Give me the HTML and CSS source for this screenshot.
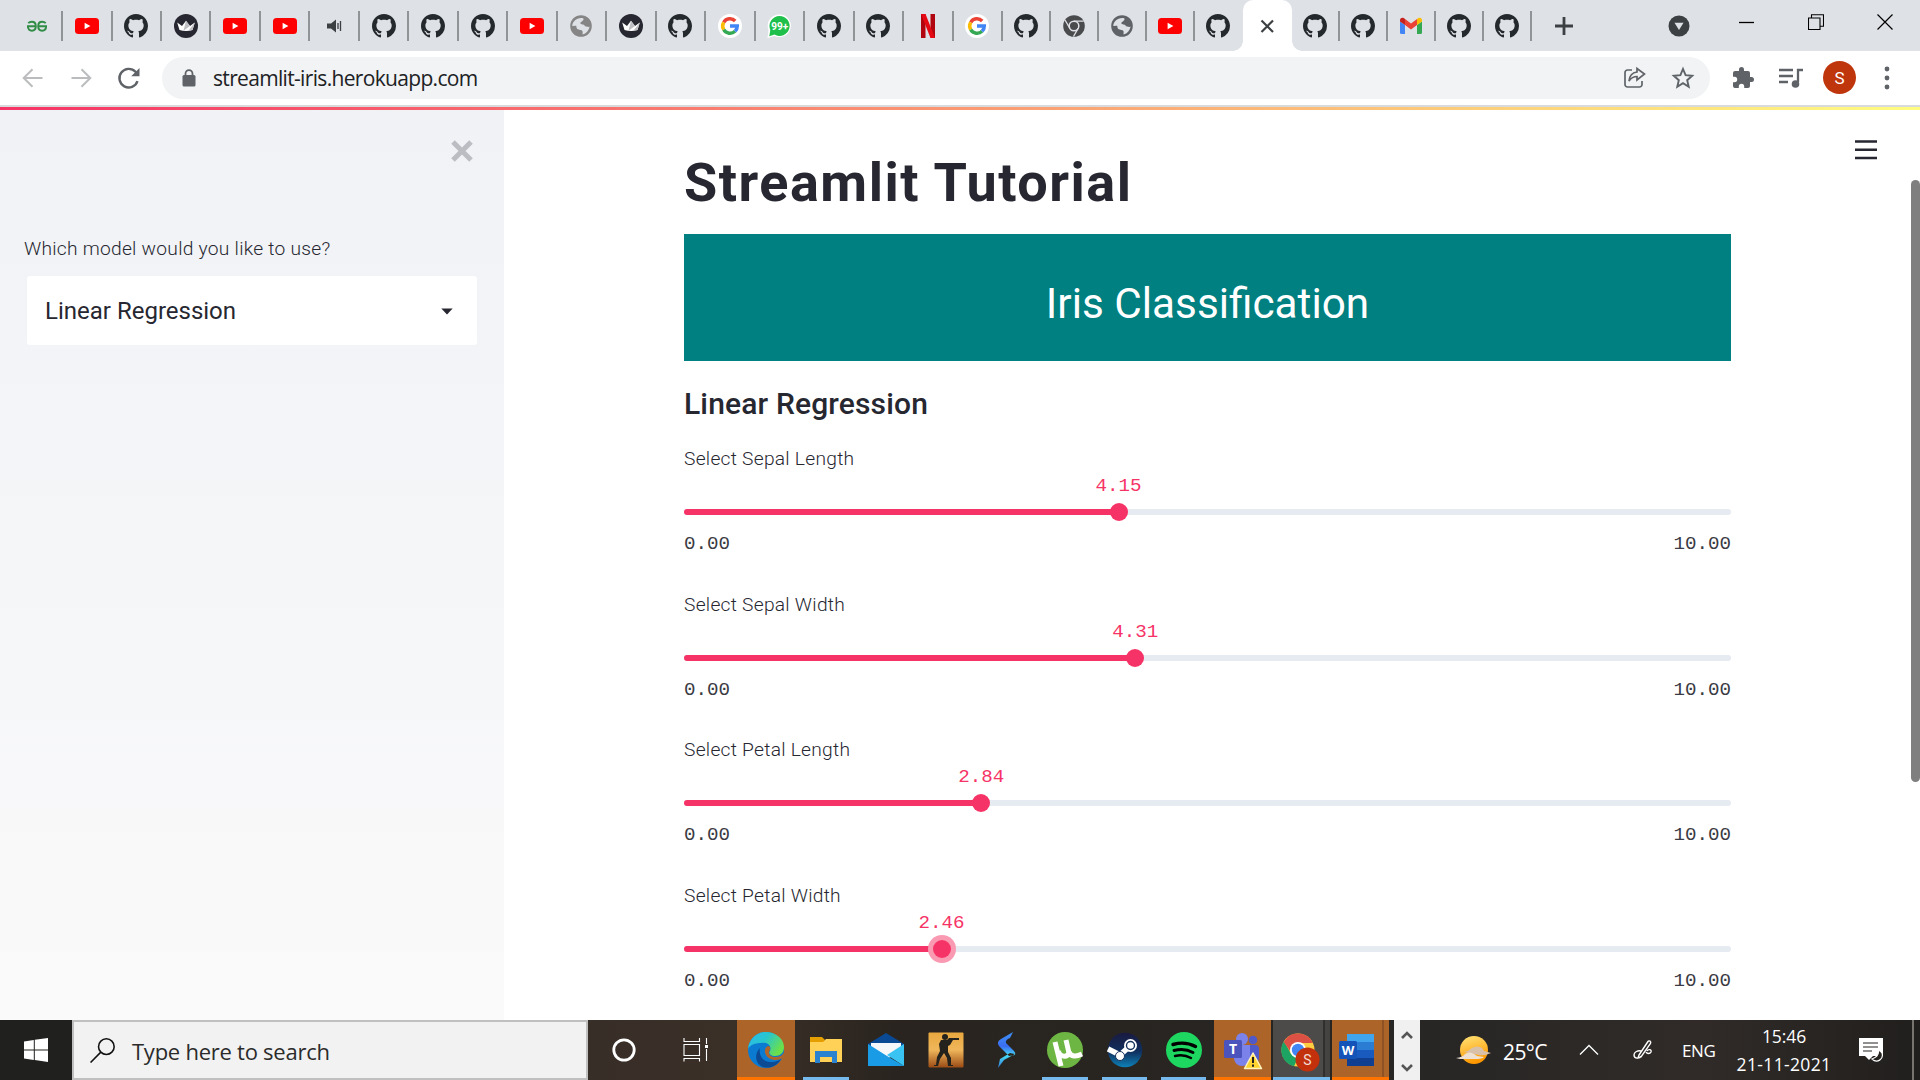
FILE: index.html
```html
<!DOCTYPE html>
<html lang="en">
<head>
<meta charset="utf-8">
<title>Streamlit Tutorial</title>
<link rel="stylesheet" href="styles.css">
</head>
<body>
<svg class="sprite" aria-hidden="true">
  <defs>
    <linearGradient id="edgeTop" x1="0" y1="0" x2="1" y2=".5"><stop offset="0" stop-color="#2db8ee"/><stop offset=".5" stop-color="#27c6cd"/><stop offset="1" stop-color="#6be04a"/></linearGradient>
    <linearGradient id="csBg" x1="0" y1="0" x2="0" y2="1"><stop offset="0" stop-color="#e9a83f"/><stop offset=".5" stop-color="#efb65a"/><stop offset="1" stop-color="#9b4b16"/></linearGradient>
    <linearGradient id="steamBg" x1="0" y1="0" x2="0" y2="1"><stop offset="0" stop-color="#1a1a3f"/><stop offset=".55" stop-color="#10305f"/><stop offset="1" stop-color="#0d82b8"/></linearGradient>
    <linearGradient id="bolt" x1="0" y1="0" x2="0" y2="1"><stop offset="0" stop-color="#3f93f5"/><stop offset=".4" stop-color="#3a6cf0"/><stop offset=".65" stop-color="#45dcf5"/><stop offset="1" stop-color="#3478d8"/></linearGradient>
    <linearGradient id="sun" x1="0" y1="0" x2=".3" y2="1"><stop offset="0" stop-color="#ffe57a"/><stop offset="1" stop-color="#ff9800"/></linearGradient>
  </defs>
  <symbol id="github" viewBox="0 0 16 16"><path fill="#24292e" d="M8 0C3.58 0 0 3.58 0 8c0 3.54 2.29 6.53 5.47 7.59.4.07.55-.17.55-.38 0-.19-.01-.82-.01-1.49-2.01.37-2.53-.49-2.69-.94-.09-.23-.48-.94-.82-1.13-.28-.15-.68-.52-.01-.53.63-.01 1.08.58 1.23.82.72 1.21 1.87.87 2.33.66.07-.52.28-.87.51-1.07-1.78-.2-3.64-.89-3.64-3.95 0-.87.31-1.59.82-2.15-.08-.2-.36-1.02.08-2.12 0 0 .67-.21 2.2.82.64-.18 1.32-.27 2-.27s1.36.09 2 .27c1.53-1.04 2.2-.82 2.2-.82.44 1.1.16 1.92.08 2.12.51.56.82 1.27.82 2.15 0 3.07-1.87 3.75-3.65 3.95.29.25.54.73.54 1.48 0 1.07-.01 1.93-.01 2.2 0 .21.15.46.55.38A8.01 8.01 0 0 0 16 8c0-4.42-3.58-8-8-8z"/></symbol>
  <symbol id="youtube" viewBox="0 0 24 24"><rect y="4" width="24" height="16" rx="3.5" fill="#f00"/><path fill="#fff" d="M9.600 8.700v6.600l5.800-3.300z"/></symbol>
  <symbol id="geeks" viewBox="0 0 24 24"><g fill="none" stroke="#2f8d46" stroke-width="1.900"><path d="M2 12.300h8.800c0-3-1.600-4.500-3.900-4.500-1.500 0-2.700.4-3.600 1.400M10.800 12.300c0 2.800-1.600 4.400-3.900 4.400-2.400 0-4-1.600-4-4.400M22 12.300h-8.800c0-3 1.600-4.500 3.900-4.500 1.500 0 2.700.4 3.600 1.400M13.200 12.300c0 2.800 1.600 4.400 3.900 4.400 2.400 0 4-1.600 4-4.400"/></g></symbol>
  <symbol id="crown" viewBox="0 0 24 24"><circle cx="12" cy="12" r="12" fill="#262730"/><path fill="#fff" d="M3.200 8.400 8 12l4-5.300 4 5.300 4.800-3.600L18.500 16q-6.500 2-13 0z"/><path fill="#bfbfc4" d="m12 6.700 4 5.300-6.500 4.800zM20.800 8.400 18.500 16l-4 .8z"/></symbol>
  <symbol id="speaker" viewBox="0 0 24 24"><path fill="#3c4043" d="M5 9.500h4l5-4v13l-5-4H5z"/><path fill="none" stroke="#3c4043" stroke-width="1.300" d="M16 9v6M18.500 7v10"/></symbol>
  <symbol id="globe" viewBox="0 0 24 24"><path fill="currentColor" d="M12 1.200a10.800 10.800 0 1 0 0 21.600 10.800 10.800 0 0 0 0-21.600zm2 3c1 .3.500 2-.5 2.500-.7 1.500-2.500 1-2 3 1.500 1 4 .5 4.500 2.500l3.500.8c.5 0 .8-.4 1-.7-.3 3.900-3.200 7.400-7 8.200 0-2 .8-3.300-1-4.300-1.500-.5-4.500-.2-5-2.700-.4-1.300.3-1.700-1-1.700L3.300 12c0-4.500 4.700-8.800 10.700-7.800z"/></symbol>
  <symbol id="google" viewBox="0 0 24 24"><circle cx="12" cy="12" r="12" fill="#fff"/><g fill="none" stroke-width="3.500"><path stroke="#ea4335" d="M5.700 8.300a7.300 7.300 0 0 1 11.500-1.400"/><path stroke="#fbbc05" d="M5.700 15.700a7.300 7.300 0 0 1 0-7.400"/><path stroke="#34a853" d="M17 17.300a7.300 7.300 0 0 1-11.300-1.600"/><path stroke="#4285f4" d="M12 12h7.300a7.300 7.300 0 0 1-2.300 5.300"/></g></symbol>
  <symbol id="netflix" viewBox="0 0 24 24"><path fill="#b1060f" d="M5 0h4.500v24H5zM14.500 0H19v24h-4.500z"/><path fill="#e50914" d="M5 0h4.500L19 24h-4.500z"/></symbol>
  <symbol id="chromeDark" viewBox="0 0 24 24"><circle cx="12" cy="12" r="10.800" fill="#4a4b4d"/><circle cx="12" cy="12" r="4.800" fill="#4a4b4d" stroke="#dee1e6" stroke-width="1.500"/><path fill="none" stroke="#dee1e6" stroke-width="1.300" d="M12 7.200h9.700M7.900 14.400 3 6M16.100 14.400 11.500 22.500"/></symbol>
  <symbol id="gmail" viewBox="0 0 24 24"><path fill="#4285f4" d="M1 7.500 6 11v9H2.500A1.500 1.500 0 0 1 1 18.500z"/><path fill="#34a853" d="M18 11l5-3.500v11a1.500 1.500 0 0 1-1.500 1.500H18z"/><path fill="#ea4335" d="m6 5 6 4.600L18 5v6l-6 4.600L6 11z"/><path fill="#c5221f" d="M1 6.300C1 3.700 3.600 3.200 5 4.200L6 5v6L1 7.500z"/><path fill="#fbbc04" d="M23 6.300c0-2.600-2.600-3.100-4-2.100L18 5v6l5-3.500z"/></symbol>
</svg>

<header class="tabs">
  <div class="tab"><svg><use href="#geeks"/></svg></div>
  <div class="tab"><svg><use href="#youtube"/></svg></div>
  <div class="tab"><svg><use href="#github"/></svg></div>
  <div class="tab"><svg><use href="#crown"/></svg></div>
  <div class="tab"><svg><use href="#youtube"/></svg></div>
  <div class="tab"><svg><use href="#youtube"/></svg></div>
  <div class="tab"><svg><use href="#speaker"/></svg></div>
  <div class="tab"><svg><use href="#github"/></svg></div>
  <div class="tab"><svg><use href="#github"/></svg></div>
  <div class="tab"><svg><use href="#github"/></svg></div>
  <div class="tab"><svg><use href="#youtube"/></svg></div>
  <div class="tab light"><svg><use href="#globe"/></svg></div>
  <div class="tab"><svg><use href="#crown"/></svg></div>
  <div class="tab"><svg><use href="#github"/></svg></div>
  <div class="tab"><svg><use href="#google"/></svg></div>
  <div class="tab"><svg viewBox="0 0 24 24"><path fill="#fff" d="M12.500.5a11.300 11.300 0 1 1-5 21.400L.5 24l1-8A11.300 11.300 0 0 1 12.500.5z"/><path fill="#1fbf4b" d="M12.500 2a10 10 0 1 1-5 18.600L2.300 22.300 3.300 16A10 10 0 0 1 12.500 2z"/><text class="badge" x="12.700" y="15.900" text-anchor="middle">99+</text></svg></div>
  <div class="tab"><svg><use href="#github"/></svg></div>
  <div class="tab"><svg><use href="#github"/></svg></div>
  <div class="tab"><svg><use href="#netflix"/></svg></div>
  <div class="tab"><svg><use href="#google"/></svg></div>
  <div class="tab narrow"><svg><use href="#github"/></svg></div>
  <div class="tab narrow"><svg><use href="#chromeDark"/></svg></div>
  <div class="tab narrow"><svg><use href="#globe"/></svg></div>
  <div class="tab narrow"><svg><use href="#youtube"/></svg></div>
  <div class="tab narrow plain"><svg><use href="#github"/></svg></div>
  <div class="tab narrow active"><svg viewBox="0 0 24 24"><path d="m6.500 6.500 11.500 11.500M18 6.500 6.500 18" stroke="#3c4043" stroke-width="2.200"/></svg></div>
  <div class="tab narrow"><svg><use href="#github"/></svg></div>
  <div class="tab narrow"><svg><use href="#github"/></svg></div>
  <div class="tab narrow"><svg><use href="#gmail"/></svg></div>
  <div class="tab narrow"><svg><use href="#github"/></svg></div>
  <div class="tab narrow"><svg><use href="#github"/></svg></div>
  <svg class="new-tab" viewBox="0 0 24 24"><path d="M12 3v18M3 12h18" stroke="#3c4043" stroke-width="2.800"/></svg>
  <div class="window">
    <svg class="tab-search" viewBox="0 0 22 22"><circle cx="11" cy="11" r="10.500" fill="#3c4043"/><path d="M6.500 7.700h9L11 15z" fill="#dee1e6"/></svg>
    <svg class="win" viewBox="0 0 16 16"><path d="M0 8.500h15" stroke="#000" stroke-width="1.300"/></svg>
    <svg class="win" viewBox="0 0 16 16"><path d="M.5 4h11.500v11.500H.5zM3.500 4V.7h12v11.500h-3.300" fill="none" stroke="#000" stroke-width="1.100"/></svg>
    <svg class="win" viewBox="0 0 16 16"><path d="m.5.5 15 15M15.500.5l-15 15" stroke="#000" stroke-width="1.200"/></svg>
  </div>
</header>

<nav class="toolbar">
  <svg class="nav-icon" viewBox="0 0 24 24"><path d="M21.500 12H3M11.500 3.200 2.700 12l8.800 8.800" fill="none" stroke="#babcbe" stroke-width="2"/></svg>
  <svg class="nav-icon" viewBox="0 0 24 24"><path d="M2.500 12H21M12.500 3.200l8.800 8.800-8.800 8.800" fill="none" stroke="#babcbe" stroke-width="2"/></svg>
  <svg class="nav-icon" viewBox="0 0 24 24"><path d="M20.500 15.200a9.300 9.300 0 1 1-2-9.400l2.300 2.500" fill="none" stroke="#5f6368" stroke-width="2.400"/><path d="M22.500 2v8.300h-8.300z" fill="#5f6368"/></svg>
  <div class="address">
    <svg class="lock" viewBox="0 0 14 18"><rect x=".5" y="6" width="13" height="11.500" rx="1.500" fill="#5f6368"/><path d="M3.500 7V4.700a3.500 3.500 0 0 1 7 0V7" fill="none" stroke="#5f6368" stroke-width="1.800"/></svg>
    <span class="url">streamlit-iris.herokuapp.com</span>
    <svg class="bar-icon" viewBox="0 0 24 24"><path d="M9 4H4.500A2.500 2.500 0 0 0 2 6.500v12A2.500 2.500 0 0 0 4.500 21h12a2.500 2.500 0 0 0 2.500-2.500V15M14 2.500 21.500 8 14 14v-3.500c-4 0-6 1.500-8 4.500.5-5.500 4-8.500 8-9z" fill="none" stroke="#5f6368" stroke-width="1.700"/></svg>
    <svg class="bar-icon" viewBox="0 0 24 24"><path d="m12 3 2.600 6.200 6.600.6-5 4.400 1.500 6.500L12 17.200l-5.700 3.500 1.500-6.500-5-4.400 6.600-.6z" fill="none" stroke="#5f6368" stroke-width="1.900"/></svg>
  </div>
  <svg class="ext" viewBox="0 0 24 24"><path fill="#5f6368" d="M20.500 11H19V7a2 2 0 0 0-2-2h-4V3.500a2.500 2.500 0 0 0-5 0V5H4a2 2 0 0 0-2 2v3.800h1.500a2.700 2.700 0 0 1 0 5.400H2V20a2 2 0 0 0 2 2h3.800v-1.500a2.700 2.700 0 0 1 5.400 0V22H17a2 2 0 0 0 2-2v-4h1.500a2.500 2.500 0 0 0 0-5z"/></svg>
  <svg class="media" viewBox="0 0 24 24"><path d="M0 4h14M0 10h14M0 16h9M19 16V4h5" fill="none" stroke="#5f6368" stroke-width="2.300"/><circle cx="16.500" cy="18" r="3.800" fill="#5f6368"/></svg>
  <span class="avatar">S</span>
  <svg class="kebab" viewBox="0 0 6 24"><g fill="#5f6368"><circle cx="3" cy="3" r="2.400"/><circle cx="3" cy="12" r="2.400"/><circle cx="3" cy="21" r="2.400"/></g></svg>
</nav>

<div class="decoration"></div>
<div class="app">
  <aside class="sidebar">
    <svg class="close" viewBox="0 0 22 22"><path d="m2 2 18 18M20 2 2 20" stroke="#bcbdc3" stroke-width="5"/></svg>
    <label class="question">Which model would you like to use?</label>
    <div class="select"><span>Linear Regression</span><svg class="caret" viewBox="0 0 12 7"><path d="M.3.500h11.400L6 6.500z" fill="#262730"/></svg></div>
  </aside>
  <main class="main">
    <h1>Streamlit Tutorial</h1>
    <div class="banner">Iris Classification</div>
    <h3>Linear Regression</h3>
    <section class="slider">
      <label>Select Sepal Length</label>
      <div class="track"><div class="fill" style="width:41.5%"><i class="thumb"></i><b>4.15</b></div></div>
      <div class="range"><span>0.00</span><span>10.00</span></div>
    </section>
    <section class="slider">
      <label>Select Sepal Width</label>
      <div class="track"><div class="fill" style="width:43.1%"><i class="thumb"></i><b>4.31</b></div></div>
      <div class="range"><span>0.00</span><span>10.00</span></div>
    </section>
    <section class="slider">
      <label>Select Petal Length</label>
      <div class="track"><div class="fill" style="width:28.4%"><i class="thumb"></i><b>2.84</b></div></div>
      <div class="range"><span>0.00</span><span>10.00</span></div>
    </section>
    <section class="slider">
      <label>Select Petal Width</label>
      <div class="track"><div class="fill" style="width:24.6%"><i class="thumb focus"></i><b>2.46</b></div></div>
      <div class="range"><span>0.00</span><span>10.00</span></div>
    </section>
  </main>
  <svg class="menu" viewBox="0 0 22 20"><path d="M0 1.500h22M0 9.700h22M0 18h22" stroke="#262730" stroke-width="2.600"/></svg>
  <i class="scrollbar"></i>
</div>

<footer class="taskbar">
  <div class="start"><svg viewBox="0 0 24 24"><path fill="#fff" d="M0 3.400 9.800 2v9.400H0zM10.800 1.800 24 0v11.400H10.800zM0 12.400h9.800v9.500L0 20.600zM10.800 12.400H24V24l-13.200-1.900z"/></svg></div>
  <div class="search">
    <svg viewBox="0 0 24 24"><circle cx="15.700" cy="8.300" r="7.500" fill="none" stroke="#111" stroke-width="1.500"/><path d="M10.400 13.600.5 23.500" stroke="#111" stroke-width="1.500"/></svg>
    <span>Type here to search</span>
  </div>
  <div class="cell cortana"><svg viewBox="0 0 36 36"><circle cx="18" cy="18" r="10.200" fill="none" stroke="#fff" stroke-width="2.800"/></svg></div>
  <div class="cell taskview"><svg viewBox="0 0 36 36"><path d="M6 6v3.500h15.500V6M6 12.500h15.500v11H6zM6 29.500v-3h15.500v3M28.500 6v6M28.500 17v12" fill="none" stroke="#fff" stroke-width="1.100"/><path fill="#fff" d="M27 13h3v3h-3z"/></svg></div>
  <div class="cell alert edge"><svg viewBox="0 0 36 36"><circle cx="18" cy="18" r="18" fill="#0b7bd2"/><path fill="url(#edgeTop)" d="M0 17C1 7 9 0 18 0c10 0 18 7 18 15 0 6-4 9-9 9-4 0-7-2-5-5 2-6-3-9-9-8C7 11 2 13 0 17z"/><path fill="#0c4a94" d="M12 16c-2 8 4 15 12 14 4 0 7-2 9-3-4 7-11 10-18 8-8-3-9-13-3-19z"/><path fill="#b06529" d="M21.500 18.500c-2 3 1 7 7 6.500 4-.3 6-2 6.500-3.500l1.500 0v5l-2-.5c-5 3.500-14 2.500-17-4-1.500-4 0-7 2.500-8 2 0 3 2 1.500 4.500z"/></svg></div>
  <div class="cell open explorer"><svg viewBox="0 0 36 36"><path fill="#e59e00" d="M2 5h12l3 3-2 5H2z"/><path fill="#ffd257" d="M2 10h13l3-3h16v23H2z"/><path fill="#2b83cf" d="M7 19h22v12h-5v-6H12v6H7z"/></svg></div>
  <div class="cell mail"><svg viewBox="0 0 36 36"><path fill="#0a4a95" d="M0 12 18 1l18 11v4H0z"/><path fill="#f5f7f9" d="M3 11h30v10L18 27 3 21z"/><path fill="#1a9be6" d="M0 12l19 12 17 10H0z"/><path fill="#39c3f3" d="M36 12 19 23l17 11z"/></svg></div>
  <div class="cell cs"><svg viewBox="0 0 36 36"><rect x=".5" y=".5" width="35" height="35" rx="1" fill="url(#csBg)"/><g fill="#24221d"><circle cx="17" cy="5" r="3"/><path d="M13 8h6l2-2h10v2h-6l-3 5-2 1v6l3 6 0 7h2v1h-5l-1-8-3-5-4 6-2 7H6v-1h2l1-8 3-6-1-7z"/></g></svg></div>
  <div class="cell bolt"><svg viewBox="0 0 36 36"><path fill="url(#bolt)" d="M26 0 14 7q-5 3-2 7l10 10 6-1q1-2-1-4l-8-8q-1-3 4-5zM28 22l-11 6-6 8 2-9q5-3 10-6z"/></svg></div>
  <div class="cell open utor"><svg viewBox="0 0 36 36"><circle cx="18" cy="18" r="18" fill="#6eb643"/><g fill="none" stroke="#fff" stroke-width="5"><path d="m8 10 6 24M11 19c2 6 9 7 11 2L19 8M22 20c2 5 7 5 13 2"/></g></svg></div>
  <div class="cell open steam"><svg viewBox="0 0 36 36"><circle cx="18" cy="18" r="17.300" fill="url(#steamBg)"/><path d="m1 17 12 6 10-9" stroke="#fff" stroke-width="5.500" fill="none"/><circle cx="23.500" cy="13.500" r="6.500" fill="#fff"/><circle cx="23.500" cy="13.500" r="4" fill="none" stroke="#16315b" stroke-width="1.400"/><circle cx="13" cy="24" r="4.500" fill="#fff" stroke="#16315b"/></svg></div>
  <div class="cell open spotify"><svg viewBox="0 0 36 36"><circle cx="18" cy="18" r="18" fill="#1ed760"/><g fill="none" stroke="#000" stroke-linecap="round"><path d="M7 12.500c8-2.300 16-1.500 22.500 2" stroke-width="3.400"/><path d="M8 18.500c7-1.800 13.500-1 19 2" stroke-width="2.900"/><path d="M9 24c6-1.400 11-.8 16 2" stroke-width="2.400"/></g></svg></div>
  <div class="cell alert teams"><svg viewBox="0 0 42 40"><circle cx="20" cy="8" r="6" fill="#7b83eb"/><circle cx="31" cy="9" r="4.300" fill="#5059c9"/><rect x="25" y="14" width="12" height="17" rx="4" fill="#5059c9"/><path fill="#7b83eb" d="M12 14h16v13a8 8 0 0 1-16 0z"/><rect x="2" y="9" width="18" height="18" rx="1.500" fill="#4b53bc"/><text x="11" y="23" text-anchor="middle" font-family="Open Sans,sans-serif" font-size="14" font-weight="700" fill="#fff">T</text><path d="m31 22 8.500 15.500h-17z" fill="#ffd42e" stroke="#fff3bd" stroke-width="1.500" stroke-linejoin="round"/><path d="M31 26v6M31 33.500v2.300" stroke="#222" stroke-width="2"/></svg></div>
  <div class="cell open chrome"><svg viewBox="0 0 40 40"><circle cx="18" cy="18" r="16.500" fill="#ffcd40"/><path fill="#1da362" d="M4 9 11 22l7 4-4 8.200A16.500 16.500 0 0 1 4 9z"/><path fill="#dd5144" d="M3.700 10A16.500 16.500 0 0 1 33 11H18l-8 8z"/><circle cx="18" cy="18" r="8" fill="#fff"/><circle cx="18" cy="18" r="6.200" fill="#4285f4"/><circle cx="27.500" cy="27.500" r="12" fill="#c2310c"/><text x="27.500" y="32.500" text-anchor="middle" font-family="Roboto,sans-serif" font-size="14" fill="#f2dcd6">S</text></svg></div>
  <div class="cell alert word"><svg viewBox="0 0 36 36"><path fill="#41a5ee" d="M8 2h27v8H8z"/><path fill="#2b7cd3" d="M8 10h27v8H8z"/><path fill="#185abd" d="M8 18h27v8H8z"/><path fill="#103f91" d="M8 26h27v8H8z"/><rect y="9" width="18" height="18" rx="1.500" fill="#1454b8"/><text x="9" y="22.500" text-anchor="middle" font-family="Open Sans,sans-serif" font-size="13" font-weight="700" fill="#fff">W</text></svg></div>
  <div class="scroller"><svg viewBox="0 0 12 8"><path d="m1 7 5-5 5 5" fill="none" stroke="#555" stroke-width="2.600"/></svg><svg viewBox="0 0 12 8"><path d="m1 1 5 5 5-5" fill="none" stroke="#555" stroke-width="2.600"/></svg></div>
  <div class="tray">
    <svg class="weather" viewBox="0 0 36 30"><circle cx="18" cy="15" r="14" fill="url(#sun)"/><path fill="#d9c1a9" d="M8 17q5-1 8-4 5-3 10 0l2 3 7 2q-7 3-12 2z"/><path fill="#efe1d2" d="M0 23q7-1 9-4 5-3 9 0l3 2 7 1q-2 2-9 2H4z"/></svg>
    <span class="temp">25°C</span>
    <svg class="up" viewBox="0 0 20 12"><path d="m1 10.500 9-9 9 9" fill="none" stroke="#fff" stroke-width="1.300"/></svg>
    <svg class="pen" viewBox="0 0 22 22"><path d="M7 16 16 2.500c1-1.500 3.500 0 2.500 2L9 18l-3 1zM9 12c-3-1-7 1-7 4 0 4 6 4 7 1M15 12c1-2 5-2 4 1-1 2-4 2-5 0" fill="none" stroke="#fff" stroke-width="1.400"/></svg>
    <span class="lang">ENG</span>
    <div class="clock"><span>15:46</span><span class="date">21-11-2021</span></div>
    <svg class="notice" viewBox="0 0 26 26"><path fill="#fff" d="M1 1h24v18H15l-4 4-4-4H1z"/><path d="M5 6h15M5 10h15M5 14h9" stroke="#26231f" stroke-width="1.200"/><path d="M20 13q2 6-6 9c5 5 12 0 10-6q-1-2-4-3z" fill="#26231f" stroke="#fff" stroke-width="1.200"/></svg>
    <i class="desktop-edge"></i>
  </div>
</footer>
</body>
</html>
```
FILE: styles.css
```css
* { box-sizing: border-box; }
body { margin: 0; width: 1920px; height: 1080px; overflow: hidden; display: flex; flex-direction: column; background: #fff; color: #262730; font-family: Roboto, "Liberation Sans", sans-serif; }
svg { display: block; flex: none; }
.sprite { position: absolute; width: 0; height: 0; }

.tabs { height: 51px; flex: none; display: flex; align-items: center; background: #dee1e6; padding-left: 13.600px; }
.tab { width: 49.470px; height: 30px; flex: none; display: flex; align-items: center; justify-content: center; border-right: 2px solid #919497; color: #5f6368; }
.tab svg { width: 24px; height: 24px; }
.badge { font: 700 10px Roboto, sans-serif; fill: #fff; }
.tab.narrow { width: 48px; }
.tab.light { color: #858585; }
.tab.plain { border-color: transparent; }
.tab.active { width: 49px; height: 51px; background: #fff; border: 0; border-radius: 10px 10px 0 0; position: relative; }
.tab.active::before, .tab.active::after { content: ""; position: absolute; bottom: 0; width: 10px; height: 10px; }
.tab.active::before { right: 100%; background: radial-gradient(circle at 0 0, transparent 9.500px, #fff 10px); }
.tab.active::after { left: 100%; background: radial-gradient(circle at 100% 0, transparent 9.500px, #fff 10px); }
.new-tab { width: 24px; height: 24px; margin-left: 20px; }
.window { flex: 1; display: flex; align-items: center; justify-content: flex-end; padding-right: 27px; }
.tab-search { width: 22px; height: 22px; margin: 0 49px 0 0; }
.win { width: 16px; height: 16px; margin-bottom: 8px; }
.win + .win { margin-left: 53px; }

.toolbar { height: 56px; flex: none; display: flex; align-items: center; padding: 1px 30px 2px 21px; border-bottom: 2px solid #d9dadc; }
.nav-icon { width: 24px; height: 24px; margin-right: 24px; }
.address { width: 1548px; height: 42px; margin-left: -3px; border-radius: 21px; background: #f1f3f4; display: flex; align-items: center; padding: 0 15px 0 20px; }
.lock { width: 14px; height: 18px; }
.url { flex: 1; margin-left: 17px; font: 21px/30px "Open Sans", sans-serif; letter-spacing: -.67px; color: #202124; }
.bar-icon { width: 24px; height: 24px; margin-left: 24px; }
.ext { width: 24px; height: 24px; margin-left: 21px; }
.media { width: 24px; height: 24px; margin-left: 24px; }
.avatar { width: 33px; height: 33px; margin-left: 20px; border-radius: 50%; background: #bf360c; color: #fff; display: grid; place-items: center; font-size: 17px; }
.kebab { width: 6px; height: 24px; margin-left: 28px; }

.decoration { height: 3px; flex: none; background: linear-gradient(90deg, #f63366, #fffd80); }
.app { height: 910px; flex: none; display: flex; position: relative; overflow: hidden; }
.sidebar { width: 504px; padding: 30px 27px 0 24px; display: flex; flex-direction: column; background: linear-gradient(180deg, #f0f2f6, #fafafa); }
.close { width: 22px; height: 22px; align-self: flex-end; margin-right: 4px; }
.question { margin-top: 72px; font-weight: 300; font-size: 19.200px; line-height: 30px; letter-spacing: .26px; }
.select { margin: 12px 0 0 3px; height: 69px; border-radius: 3px; background: #fff; display: flex; align-items: center; justify-content: space-between; padding: 1px 24px 0 18px; font-size: 24px; }
.caret { width: 12px; height: 7px; }
.main { width: 1047px; margin-left: 180px; }
h1 { margin: 37px 0 0; height: 87px; font-size: 54px; line-height: 72px; font-weight: 700; letter-spacing: 1.500px; white-space: nowrap; }
.banner { height: 127px; padding-top: 11px; background: #008080; color: #fff; display: grid; place-items: center; font-size: 42.300px; }
h3 { margin: 22px 0 0; height: 60px; font-size: 30px; line-height: 42px; font-weight: 500; letter-spacing: .15px; }
.slider { height: 145.600px; display: flex; flex-direction: column; font-size: 19.200px; }
.slider label { height: 66px; line-height: 32px; font-weight: 300; letter-spacing: .26px; }
.track { height: 6px; border-radius: 3px; background: #e6eaf1; }
.fill { height: 6px; border-radius: 3px; background: #f63366; position: relative; }
.thumb { position: absolute; right: -9px; top: -6px; width: 18px; height: 18px; border-radius: 50%; background: #f63366; }
.thumb.focus { box-shadow: 0 0 0 5px #fa99b2; }
.fill b { position: absolute; left: 100%; top: -34px; width: 60px; margin-left: -30px; text-align: center; color: #f63366; font: 19.200px/22px "Liberation Mono", monospace; }
.range { display: flex; justify-content: space-between; margin-top: 18px; color: #3a3b44; font: 19.200px/22px "Liberation Mono", monospace; }
.menu { position: absolute; right: 43px; top: 30px; width: 22px; height: 20px; }
.scrollbar { position: absolute; right: 0; top: 70px; width: 9px; height: 602px; border-radius: 5px; background: #7f7f7f; }

.taskbar { height: 60px; flex: none; display: flex; background: linear-gradient(90deg, #20201f 0, #20201f 100px, #382e28 588px, #3a3027 750px, #29241f 900px, #272624 1420px, #302b29 1700px, #211f1d 1920px); color: #fff; font-family: "Open Sans", sans-serif; }
.start { width: 72px; display: grid; place-items: center; }
.start svg { width: 24px; height: 24px; }
.search { width: 516px; border: 2px solid #c0c0c0; background: #f2f2f2; color: #2b2b2b; display: flex; align-items: center; padding-left: 16px; font-size: 22px; letter-spacing: -.25px; }
.search svg { width: 25px; height: 25px; margin-right: 17px; }
.search span { padding-top: 2px; }
.cell { flex: none; width: 60px; display: flex; align-items: center; justify-content: center; border-bottom: 3px solid transparent; padding-top: 3px; }
.cell svg { width: 36px; height: 36px; }
.cell.cortana { width: 72px; }
.cell.taskview { width: 77px; padding-right: 6px; }
.open { border-color: #76b9ed; }
.alert { background-color: #ac6429; border-color: #ff7300; }
.edge { width: 58px; }
.explorer { width: 46px; margin: 0 7px 0 8px; }
.mail { width: 50px; margin: 0 5px; }
.cs { width: 60px; }
.bolt { width: 58px; }
.utor { width: 46px; margin: 0 7px 0 8px; }
.steam { width: 45px; margin: 0 7px; }
.spotify { width: 45px; margin: 0 8px 0 7px; }
.teams { width: 57px; }
.teams svg { width: 42px; height: 40px; margin-top: 2px; }
.chrome { width: 57px; margin: 0 2px; background: linear-gradient(90deg, #4d4b49 50px, #312f2d 50px, #312f2d 52px, #454341 52px); }
.chrome svg { width: 40px; height: 40px; margin: 4px 3px 0 0; }
.word { width: 57px; background-image: linear-gradient(90deg, transparent 50px, #8f5224 50px, #8f5224 52px, transparent 52px); }
.word svg { margin-right: 8px; }
.scroller { width: 26px; margin-left: 5px; background: #f0f0f0; display: flex; flex-direction: column; align-items: center; justify-content: space-between; padding: 11px 0 8px; }
.scroller svg { width: 12px; height: 8px; }
.tray { flex: 1; display: flex; align-items: center; padding-left: 36px; white-space: nowrap; }
.weather { width: 36px; height: 30px; }
.temp { width: 56px; margin: 4px 0 0 11px; font-size: 21px; letter-spacing: -.6px; }
.up { width: 20px; height: 12px; margin-left: 20px; }
.pen { width: 22px; height: 22px; margin-left: 33px; }
.lang { width: 35px; margin-left: 28px; font-size: 17px; letter-spacing: -.4px; }
.clock { width: 96px; margin-left: 19px; display: flex; flex-direction: column; align-items: center; font-size: 17.500px; line-height: 28px; letter-spacing: -.1px; }
.date { letter-spacing: .35px; }
.notice { width: 26px; height: 26px; margin-left: 26px; }
.desktop-edge { width: 2px; height: 60px; background: #77736f; margin-left: auto; margin-right: 6px; }
```
